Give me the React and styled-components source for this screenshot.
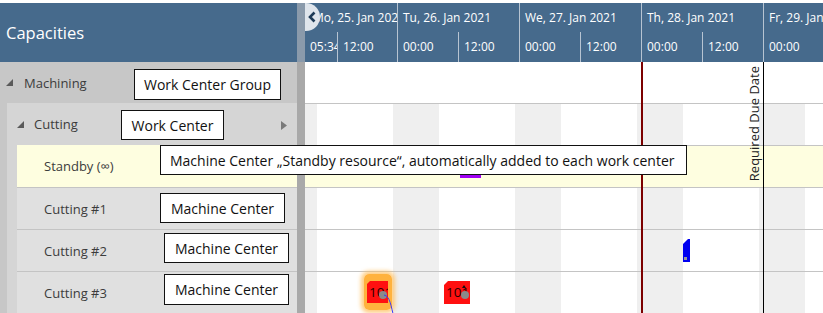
import React from "react";
import styled, { createGlobalStyle, css } from "styled-components";

const Global = createGlobalStyle`
  html, body { margin: 0; padding: 0; background: #fff; }
  body { font-family: "Open Sans", "Noto Sans", sans-serif; }
  * { box-sizing: border-box; }
`;

const BLUE = "#466a8c";

const Frame = styled.div`
  position: relative;
  width: 823px;
  height: 313px;
  padding-top: 3px;
  display: flex;
  overflow: hidden;
  background: #fff;
`;

const LeftPanel = styled.div`
  width: 297px;
  flex: none;
  display: flex;
  flex-direction: column;
`;

const PanelHeader = styled.div`
  height: 59px;
  flex: none;
  background: ${BLUE};
  color: #fff;
  font-size: 16.5px;
  display: flex;
  align-items: center;
  padding: 0 0 0 6px;
`;

const Group = styled.div`
  flex: 1;
  display: flex;
  flex-direction: column;
  background: ${(p) => p.$bg};
  margin-left: ${(p) => p.$indent || 0}px;
`;

const TreeRow = styled.div`
  height: ${(p) => p.$h}px;
  flex: none;
  display: flex;
  align-items: center;
  padding-left: ${(p) => p.$pad}px;
  font-size: 13px;
  color: #3c3c3c;
  gap: ${(p) => p.$gap}px;
  position: relative;
`;

const LeafRow = styled.div`
  height: 42px;
  flex: none;
  display: flex;
  align-items: center;
  padding-left: 27px;
  font-size: 13px;
  color: #3c3c3c;
  background: ${(p) => (p.$highlight ? "#fefee0" : "#e0e0e0")};
  border-top: ${(p) => (p.$first ? "none" : "1px solid #c4c4c4")};
`;

const ExpandIcon = styled.svg`
  width: 7px;
  height: 7px;
  flex: none;
`;

const MoreArrow = styled.svg`
  position: absolute;
  right: 10px;
  top: 18px;
  width: 6px;
  height: 9px;
`;

const Splitter = styled.div`
  width: 8px;
  flex: none;
  display: flex;
  flex-direction: column;
  background: #a9a9a9;
`;

const SplitterTop = styled.div`
  height: 59px;
  background: #8a9aab;
`;

const Timeline = styled.div`
  flex: 1;
  display: flex;
  flex-direction: column;
  min-width: 0;
`;

const TimeHeader = styled.div`
  position: relative;
  height: 59px;
  flex: none;
  background: ${BLUE};
  color: #fff;
  font-size: 12px;
  overflow: hidden;
`;

const ScaleRow = styled.div`
  display: flex;
  height: ${(p) => p.$h}px;
`;

const ScaleCell = styled.div`
  width: ${(p) => p.$w}px;
  flex: none;
  display: flex;
  align-items: center;
  padding-left: ${(p) => p.$pad ?? 5}px;
  padding-bottom: ${(p) => p.$lift || 0}px;
  white-space: nowrap;
  overflow: hidden;
  border-left: ${(p) => (p.$noBorder ? "none" : "1px solid #b7c4d2")};
`;

const NavButton = styled.div`
  position: absolute;
  left: -13px;
  top: 0;
  width: 28px;
  height: 28px;
  border-radius: 50%;
  background: #dfe5ec;
  display: flex;
  align-items: center;
  justify-content: flex-end;
  padding-right: 4px;
`;

const TimeBody = styled.div`
  position: relative;
  flex: 1;
  display: flex;
  flex-direction: column;
`;

const TimeRow = styled.div`
  height: ${(p) => p.$h}px;
  flex: none;
  border-top: ${(p) => (p.$first ? "none" : "1px solid #c4c4c4")};
  ${(p) =>
    p.$highlight
      ? css`
          background: #fefee0;
        `
      : p.$shaded
      ? css`
          background-color: #fff;
          background-image: linear-gradient(
            to right,
            #efefef 0 46px,
            #fff 46px 122px
          );
          background-size: 122px 100%;
          background-position: 88px 0;
          background-repeat: repeat-x;
        `
      : css`
          background: #fff;
        `}
`;

const NowLine = styled.div`
  position: absolute;
  left: 336px;
  top: 0;
  bottom: 0;
  width: 2px;
  background: #7c0000;
`;

const DueLine = styled.div`
  position: absolute;
  left: 458px;
  top: 0;
  bottom: 0;
  width: 1px;
  background: #000;
`;

const DueLabel = styled.div`
  position: absolute;
  left: 441px;
  top: 4px;
  writing-mode: vertical-rl;
  transform: rotate(180deg);
  font-size: 13px;
  color: #222;
  white-space: nowrap;
  line-height: 17px;
`;

const Task = styled.div`
  position: absolute;
  left: ${(p) => p.$x}px;
  top: ${(p) => p.$y}px;
  width: ${(p) => p.$w}px;
  height: ${(p) => p.$h}px;
`;

const TaskShape = styled.div`
  position: relative;
  width: 100%;
  height: 100%;
  background: ${(p) => p.$color};
  clip-path: polygon(${(p) => p.$cut}px 0, 100% 0, 100% 100%, 0 100%, 0 ${(p) => p.$cut}px);
  font-size: 13.5px;
  color: #2a0000;
  line-height: 22px;
  padding-left: 2px;
  white-space: nowrap;
  overflow: hidden;
`;

const Glow = styled.div`
  position: absolute;
  left: -3px;
  top: -7px;
  right: -4px;
  bottom: -7px;
  border-radius: 5px;
  background: rgba(255, 170, 40, 0.9);
  box-shadow: 0 0 4px 3px rgba(255, 190, 90, 0.75);
`;

const Dot = styled.div`
  position: absolute;
  right: 1px;
  top: 10px;
  width: 8px;
  height: 8px;
  border-radius: 50%;
  background: #8a8a8a;
`;

const Marker = styled.div`
  position: absolute;
  right: 4px;
  top: 4px;
  width: 0;
  height: 0;
  border-left: 2px solid transparent;
  border-right: 2px solid transparent;
  border-bottom: 3px solid #111;
`;

const SmallSquare = styled.div`
  position: absolute;
  left: 1px;
  bottom: 2px;
  width: 3px;
  height: 3px;
  background: #9a9a9a;
`;

const Link = styled.svg`
  position: absolute;
  left: 75px;
  top: 226px;
  width: 20px;
  height: 30px;
  overflow: visible;
`;

const Note = styled.div`
  position: absolute;
  left: ${(p) => p.$x}px;
  top: ${(p) => p.$y}px;
  width: ${(p) => p.$w}px;
  height: ${(p) => p.$h}px;
  background: #fff;
  border: 1px solid #111;
  display: flex;
  align-items: center;
  justify-content: ${(p) => (p.$left ? "flex-start" : "center")};
  padding-left: ${(p) => (p.$left ? 9 : 0)}px;
  font-size: 14px;
  color: #111;
  white-space: nowrap;
  z-index: 5;
`;

const Expand = () => (
  <ExpandIcon viewBox="0 0 7 7">
    <polygon points="7,0 7,7 0,7" fill="#5a5a5a" />
  </ExpandIcon>
);

const days = [
  { w: 92, label: "Mo, 25. Jan 2021", pad: 8, noBorder: true },
  { w: 122, label: "Tu, 26. Jan 2021" },
  { w: 122, label: "We, 27. Jan 2021" },
  { w: 122, label: "Th, 28. Jan 2021" },
  { w: 122, label: "Fr, 29. Jan 2021" },
];

const hours = [
  { w: 32, label: "05:34", noBorder: true },
  { w: 60, label: "12:00" },
  { w: 61, label: "00:00" },
  { w: 61, label: "12:00" },
  { w: 61, label: "00:00" },
  { w: 61, label: "12:00" },
  { w: 61, label: "00:00" },
  { w: 61, label: "12:00" },
  { w: 61, label: "00:00" },
  { w: 61, label: "12:00" },
];

export default function App() {
  return (
    <>
      <Global />
      <Frame>
        <LeftPanel>
          <PanelHeader>Capacities</PanelHeader>
          <Group $bg="#c7c7c7">
            <TreeRow $h={41} $pad={6} $gap={11}>
              <Expand />
              Machining
            </TreeRow>
            <Group $bg="#d5d5d5" $indent={7}>
              <TreeRow $h={42} $pad={10} $gap={10}>
                <Expand />
                Cutting
                <MoreArrow viewBox="0 0 6 9">
                  <polygon points="0,0 6,4.5 0,9" fill="#7a7a7a" />
                </MoreArrow>
              </TreeRow>
              <Group $bg="#e0e0e0" $indent={10}>
                <LeafRow $highlight $first>
                  Standby (∞)
                </LeafRow>
                <LeafRow>Cutting #1</LeafRow>
                <LeafRow>Cutting #2</LeafRow>
                <LeafRow>Cutting #3</LeafRow>
              </Group>
            </Group>
          </Group>
        </LeftPanel>
        <Splitter>
          <SplitterTop />
        </Splitter>
        <Timeline>
          <TimeHeader>
            <ScaleRow $h={29}>
              {days.map((d, i) => (
                <ScaleCell key={i} $w={d.w} $pad={d.pad} $noBorder={d.noBorder}>
                  {d.label}
                </ScaleCell>
              ))}
            </ScaleRow>
            <ScaleRow $h={30}>
              {hours.map((h, i) => (
                <ScaleCell key={i} $w={h.w} $noBorder={h.noBorder} $lift={2}>
                  {h.label}
                </ScaleCell>
              ))}
            </ScaleRow>
            <NavButton>
              <svg width="8" height="12" viewBox="0 0 8 12">
                <polyline
                  points="6.5,1.5 2,6 6.5,10.5"
                  fill="none"
                  stroke="#1f3b57"
                  strokeWidth="2.6"
                />
              </svg>
            </NavButton>
          </TimeHeader>
          <TimeBody>
            <TimeRow $h={41} $first />
            <TimeRow $h={42} $shaded />
            <TimeRow $h={42} $highlight />
            <TimeRow $h={42} $shaded />
            <TimeRow $h={42} $shaded />
            <TimeRow $h={42} $shaded />

            <NowLine />
            <DueLine />
            <DueLabel>Required Due Date</DueLabel>

            <Task $x={155} $y={111} $w={21} $h={5}>
              <TaskShape $color="#a000f4" $cut={0} />
            </Task>
            <Task $x={378} $y={177} $w={7} $h={23}>
              <TaskShape $color="#0000f0" $cut={5} />
              <SmallSquare />
            </Task>
            <Task $x={62} $y={219} $w={21} $h={22}>
              <Glow />
              <TaskShape $color="#ff1010" $cut={3}>
                101
              </TaskShape>
              <Dot />
            </Task>
            <Task $x={139} $y={219} $w={26} $h={23}>
              <TaskShape $color="#ff1010" $cut={4}>
                101
              </TaskShape>
              <Marker />
              <Dot />
            </Task>
            <Link viewBox="0 0 20 30">
              <path d="M4,7 C10,8 11,18 14,30" fill="none" stroke="#3a3aff" strokeWidth="1" />
            </Link>
          </TimeBody>
        </Timeline>

        <Note $x={134} $y={69} $w={147} $h={31}>Work Center Group</Note>
        <Note $x={121} $y={110} $w={103} $h={30}>Work Center</Note>
        <Note $x={160} $y={145} $w={527} $h={30} $left>
          Machine Center „Standby resource“, automatically added to each work center
        </Note>
        <Note $x={160} $y={193} $w={125} $h={30}>Machine Center</Note>
        <Note $x={164} $y={233} $w={125} $h={30}>Machine Center</Note>
        <Note $x={164} $y={274} $w={125} $h={31}>Machine Center</Note>
      </Frame>
    </>
  );
}
